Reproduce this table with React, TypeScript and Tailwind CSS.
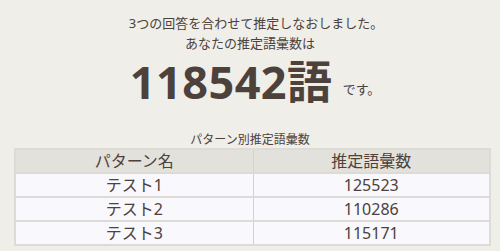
export default function App() {
  const rows = [
    { name: "テスト1", count: 125523 },
    { name: "テスト2", count: 110286 },
    { name: "テスト3", count: 115171 },
  ]

  return (
    <div
      className="w-[500px] h-[251px] overflow-hidden bg-[#efeee9] text-[#4d413b] flex flex-col items-center pt-[13px]"
      style={{ fontFamily: '"Noto Sans", "Noto Sans CJK JP", sans-serif' }}
    >
      {/* result summary */}
      <p className="text-[13px] leading-[20px] ml-[12px]">3つの回答を合わせて推定しなおしました。</p>
      <p className="text-[13px] leading-[20px]">あなたの推定語彙数は</p>
      <div className="flex items-end mt-[3px] ml-[10px]">
        <span className="text-[45px] font-bold leading-[52px] tracking-[0.5px]">118542語</span>
        <span className="text-[13px] leading-[20px] ml-[10px] mb-[9px]">です。</span>
      </div>

      {/* breakdown per pattern */}
      <p className="text-[12px] leading-[16px] mt-[24px] mb-[0px]">パターン別推定語彙数</p>
      <table className="w-[477px] self-start ml-[14px] border-collapse border-2 border-[#dcdbd6] text-[16px]">
        <thead>
          <tr className="bg-[#e3e1dc] h-[24px]">
            <th className="font-normal leading-[22px] border-r border-[#d3d2ce] w-[238px]">パターン名</th>
            <th className="font-normal leading-[22px]">推定語彙数</th>
          </tr>
        </thead>
        <tbody>
          {rows.map((r) => (
            <tr key={r.name} className="bg-[#f8f8fd] h-[24px] border-t-2 border-[#dcdbd6]">
              <td className="text-center leading-[22px] border-r border-[#d3d2ce]">{r.name}</td>
              <td className="text-center leading-[22px]">{r.count}</td>
            </tr>
          ))}
        </tbody>
      </table>
    </div>
  )
}
